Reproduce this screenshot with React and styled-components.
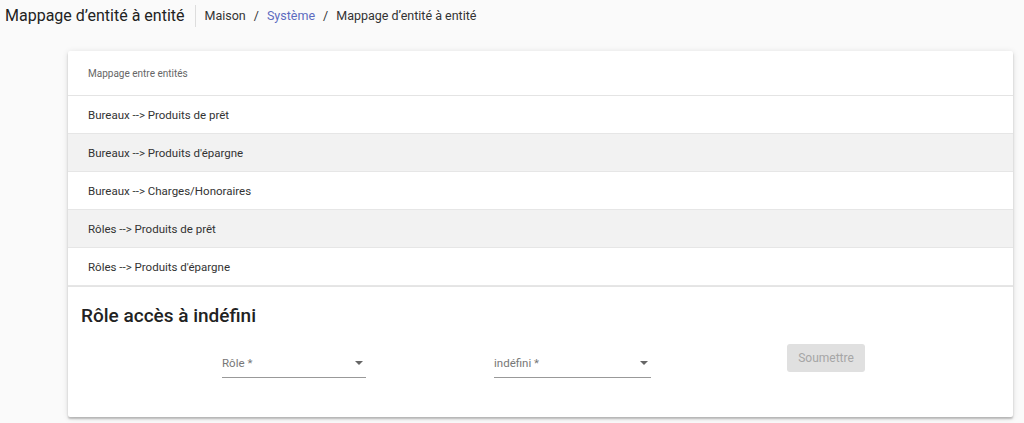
import React from 'react';
import styled, { createGlobalStyle } from 'styled-components';

const GlobalStyle = createGlobalStyle`
  html, body {
    margin: 0;
    padding: 0;
    background: #fafafa;
    font-family: Roboto, "Liberation Sans", sans-serif;
  }
`;

const Page = styled.div`
  width: 1024px;
  height: 423px;
  overflow: hidden;
`;

const TopBar = styled.div`
  display: flex;
  align-items: center;
  height: 31px;
  padding-left: 5px;
`;

const PageTitle = styled.h1`
  margin: 0;
  font-size: 16px;
  font-weight: 400;
  color: #222;
  padding-right: 10px;
  border-right: 1px solid #ddd;
  line-height: 22px;
`;

const Crumbs = styled.nav`
  display: flex;
  align-items: center;
  gap: 8px;
  padding-left: 9px;
  font-size: 12.5px;
  color: #333;
`;

const Crumb = styled.span`
  color: ${p => (p.link ? '#5c6bc0' : '#333')};
`;

const Card = styled.div`
  margin: 20px 11px 0 68px;
  background: #fff;
  box-shadow: 0 2px 2px rgba(0, 0, 0, 0.22), 0 1px 6px rgba(0, 0, 0, 0.12);
  border-radius: 2px;
  height: 366px;
`;

const CardHeader = styled.div`
  height: 44px;
  display: flex;
  align-items: center;
  padding-left: 20px;
  font-size: 10px;
  color: #666;
  border-bottom: 1px solid #e4e4e4;
`;

const Row = styled.div`
  height: 37px;
  display: flex;
  align-items: center;
  padding-left: 20px;
  font-size: 11.5px;
  color: #333;
  background: ${p => (p.shaded ? '#f2f2f2' : '#fff')};
  border-bottom: 1px solid #e6e6e6;
`;

const Section = styled.div`
  border-top: 1px solid #e4e4e4;
  padding: 17px 13px 0;
`;

const SectionTitle = styled.h2`
  margin: 0;
  font-size: 19px;
  font-weight: 500;
  color: #222;
`;

const FormRow = styled.div`
  display: flex;
  align-items: flex-start;
  margin-top: 17px;
  padding-left: 141px;
`;

const Select = styled.div`
  width: ${p => p.w}px;
  margin-right: ${p => p.gap}px;
  height: 30px;
  margin-top: 4px;
  border-bottom: 1px solid #999;
  display: flex;
  align-items: center;
  justify-content: space-between;
  font-size: 11.5px;
  color: #777;
  box-sizing: border-box;
`;

const Caret = styled.span`
  width: 0;
  height: 0;
  margin-right: 3px;
  border-left: 4px solid transparent;
  border-right: 4px solid transparent;
  border-top: 4px solid #666;
`;

const Submit = styled.button`
  width: 78px;
  height: 28px;
  border: none;
  border-radius: 3px;
  background: #e0e0e0;
  color: #a6a6a6;
  font-family: inherit;
  font-size: 12px;
`;

const rows = [
  'Bureaux --> Produits de prêt',
  'Bureaux --> Produits d\'épargne',
  'Bureaux --> Charges/Honoraires',
  'Rôles --> Produits de prêt',
  'Rôles --> Produits d\'épargne',
];

export default function App() {
  return (
    <Page>
      <GlobalStyle />
      <TopBar>
        <PageTitle>Mappage d’entité à entité</PageTitle>
        <Crumbs>
          <Crumb>Maison</Crumb>
          <Crumb>/</Crumb>
          <Crumb link>Système</Crumb>
          <Crumb>/</Crumb>
          <Crumb>Mappage d’entité à entité</Crumb>
        </Crumbs>
      </TopBar>
      <Card>
        <CardHeader>Mappage entre entités</CardHeader>
        {rows.map((r, i) => (
          <Row key={r} shaded={i % 2 === 1}>{r}</Row>
        ))}
        <Section>
          <SectionTitle>Rôle accès à indéfini</SectionTitle>
          <FormRow>
            <Select w={144} gap={128}>
              <span>Rôle *</span>
              <Caret />
            </Select>
            <Select w={157} gap={136}>
              <span>indéfini *</span>
              <Caret />
            </Select>
            <Submit disabled>Soumettre</Submit>
          </FormRow>
        </Section>
      </Card>
    </Page>
  );
}
